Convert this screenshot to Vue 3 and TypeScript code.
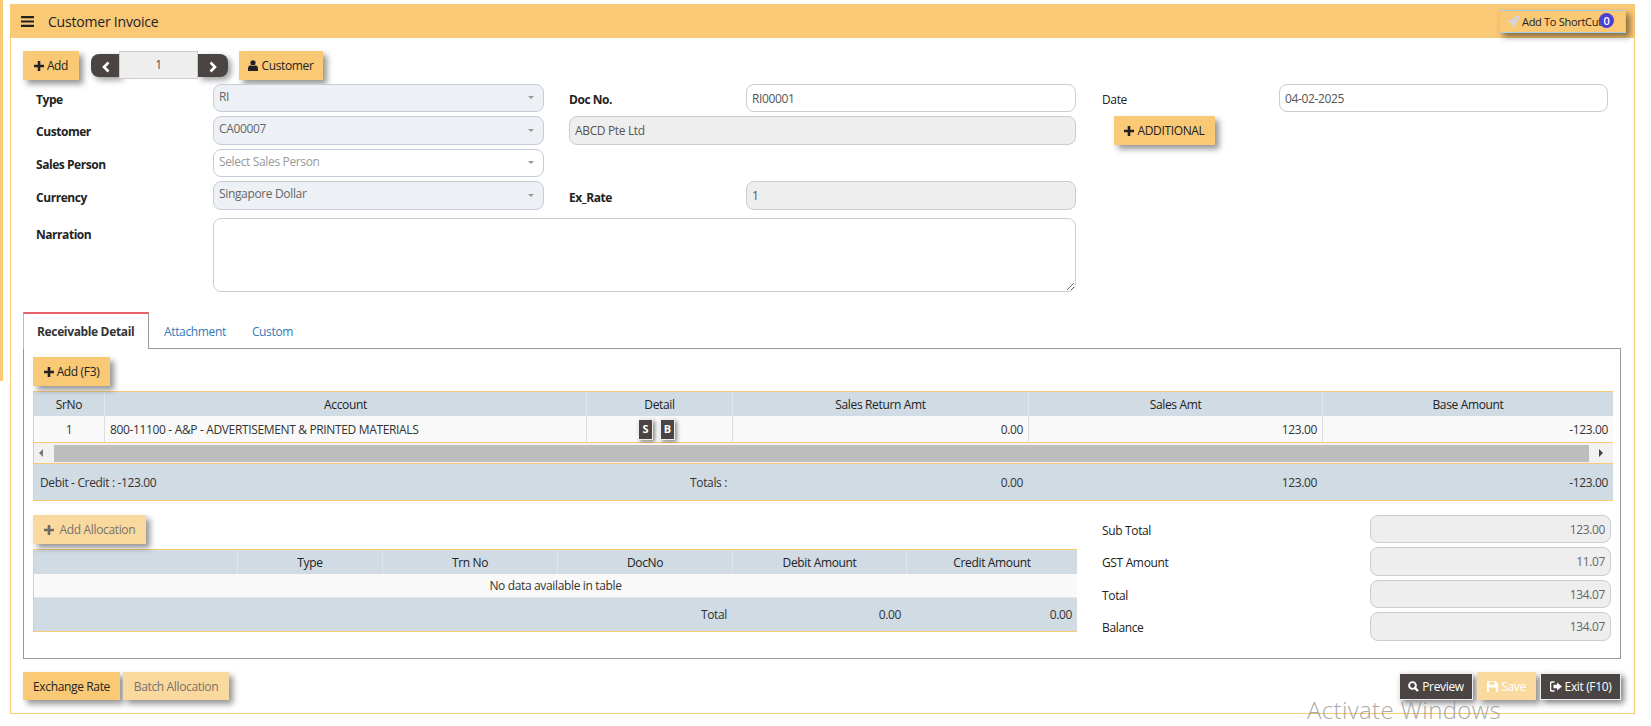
<script setup lang="ts">
const mainCols: number[] = [70, 482, 146, 296, 294, 291]
const allocCols: number[] = [203, 145, 175, 175, 174, 171]
const totals = [
  { label: 'Sub Total', value: '123.00' },
  { label: 'GST Amount', value: '11.07' },
  { label: 'Total', value: '134.07' },
  { label: 'Balance', value: '134.07' },
]
</script>

<template>
  <div class="page">
    <div class="strip"></div>
    <main class="panel">
      <header class="topbar">
        <svg class="burger" width="13" height="11" viewBox="0 0 13 11"><path d="M0 0h13v2.200H0zM0 4.400h13v2.200H0zM0 8.800h13V11H0z" fill="#222" /></svg>
        <h1 class="title">Customer Invoice</h1>
        <button class="shortcut">
          <svg width="13" height="13" viewBox="0 0 12 12"><path d="M11.500.5C8.500.6 6 2 4.300 4.300L1.800 4.600.5 6.600l2.200.2 2.500 2.500.2 2.200 2-1.300.3-2.500C10 7 11.400 4.500 11.500.5z" fill="#d3d6da" /><circle cx="8.300" cy="3.700" r="1" fill="#fac976" /></svg>
          <span>Add To ShortCut</span>
          <b class="badge">0</b>
        </button>
      </header>

      <div class="body">
        <div class="toolbar">
          <button class="btn w-add">
            <svg class="ico" width="10" height="10" viewBox="0 0 10 10"><path d="M3.700 0h2.600v3.700H10v2.600H6.300V10H3.700V6.300H0V3.700h3.700z" fill="#222" /></svg>Add
          </button>
          <div class="pager">
            <button class="pg pg-l"><svg width="10" height="12" viewBox="0 0 10 12"><path d="M7.500 1.500 3 6l4.500 4.500" fill="none" stroke="#fff" stroke-width="2.600" /></svg></button>
            <div class="pg-val">1</div>
            <button class="pg pg-r"><svg width="10" height="12" viewBox="0 0 10 12"><path d="M2.500 1.500 7 6l-4.500 4.500" fill="none" stroke="#fff" stroke-width="2.600" /></svg></button>
          </div>
          <button class="btn w-cust">
            <svg class="ico" width="10" height="11" viewBox="0 0 10 11"><circle cx="5" cy="2.800" r="2.600" fill="#222" /><path d="M0 11V8.500C0 6.500 1.200 5.300 2.600 5.200 3.300 5.800 4.100 6.100 5 6.100s1.700-.3 2.400-.9C8.800 5.300 10 6.500 10 8.500V11z" fill="#222" /></svg>Customer
          </button>
        </div>

        <form class="form" @submit.prevent>
          <label class="lbl strong c1 r1">Type</label>
          <div class="sel locked c2 r1"><span>RI</span><i class="caret"></i></div>
          <label class="lbl strong c4 r1">Doc No.</label>
          <input class="inp c5 r1" value="RI00001" />
          <label class="lbl c7 r1">Date</label>
          <input class="inp c8 r1" value="04-02-2025" />

          <label class="lbl strong c1 r2 up">Customer</label>
          <div class="sel locked c2 r2"><span>CA00007</span><i class="caret"></i></div>
          <input class="inp off wide r2" value="ABCD Pte Ltd" readonly />
          <div class="add-cell r2">
            <button class="btn w-additional">
              <svg class="ico" width="10" height="10" viewBox="0 0 10 10"><path d="M3.700 0h2.600v3.700H10v2.600H6.300V10H3.700V6.300H0V3.700h3.700z" fill="#222" /></svg>ADDITIONAL
            </button>
          </div>

          <label class="lbl strong c1 r3">Sales Person</label>
          <div class="sel c2 r3"><span class="ph">Select Sales Person</span><i class="caret"></i></div>

          <label class="lbl strong c1 r4">Currency</label>
          <div class="sel locked c2 r4"><span>Singapore Dollar</span><i class="caret"></i></div>
          <label class="lbl strong c4 r4">Ex_Rate</label>
          <input class="inp off c5 r4" value="1" readonly />

          <label class="lbl strong narr-l c1 r5">Narration</label>
          <textarea class="area r5"></textarea>
        </form>

        <nav class="tabs">
          <a class="tab active">Receivable Detail</a>
          <a class="tab t-att">Attachment</a>
          <a class="tab">Custom</a>
        </nav>

        <section class="tabpane">
          <button class="btn w-f3">
            <svg class="ico" width="10" height="10" viewBox="0 0 10 10"><path d="M3.700 0h2.600v3.700H10v2.600H6.300V10H3.700V6.300H0V3.700h3.700z" fill="#222" /></svg>Add (F3)
          </button>

          <div class="grid main-grid">
            <table>
              <colgroup><col v-for="(w, i) in mainCols" :key="i" :style="{ width: w + 'px' }" /></colgroup>
              <thead>
                <tr>
                  <th>SrNo</th><th>Account</th><th>Detail</th><th>Sales Return Amt</th><th>Sales Amt</th><th>Base Amount</th>
                </tr>
              </thead>
              <tbody>
                <tr class="row-main">
                  <td class="c">1</td>
                  <td>800-11100 - A&amp;P - ADVERTISEMENT &amp; PRINTED MATERIALS</td>
                  <td class="c mini-cell"><span class="mini">S</span><span class="mini">B</span></td>
                  <td class="r">0.00</td>
                  <td class="r">123.00</td>
                  <td class="r">-123.00</td>
                </tr>
              </tbody>
            </table>
            <div class="scrollbar">
              <i class="arrow-l"></i>
              <div class="thumb"></div>
              <i class="arrow-r"></i>
            </div>
            <table>
              <colgroup><col v-for="(w, i) in mainCols" :key="i" :style="{ width: w + 'px' }" /></colgroup>
              <tfoot>
                <tr class="foot-main">
                  <td colspan="2">Debit - Credit : -123.00</td>
                  <td class="r">Totals :</td>
                  <td class="r">0.00</td>
                  <td class="r">123.00</td>
                  <td class="r">-123.00</td>
                </tr>
              </tfoot>
            </table>
          </div>

          <div class="lower">
            <div class="lower-left">
              <button class="btn dim w-alloc">
                <svg class="ico" width="10" height="10" viewBox="0 0 10 10"><path d="M3.700 0h2.600v3.700H10v2.600H6.300V10H3.700V6.300H0V3.700h3.700z" fill="#6f6a62" /></svg>&nbsp;Add Allocation
              </button>
              <div class="grid alloc-grid">
                <table>
                  <colgroup><col v-for="(w, i) in allocCols" :key="i" :style="{ width: w + 'px' }" /></colgroup>
                  <thead>
                    <tr><th></th><th>Type</th><th>Trn No</th><th>DocNo</th><th>Debit Amount</th><th>Credit Amount</th></tr>
                  </thead>
                  <tbody>
                    <tr class="row-empty"><td colspan="6" class="c">No data available in table</td></tr>
                  </tbody>
                  <tfoot>
                    <tr class="foot-alloc">
                      <td colspan="4" class="r">Total</td>
                      <td class="r">0.00</td>
                      <td class="r">0.00</td>
                    </tr>
                  </tfoot>
                </table>
              </div>
            </div>
            <div class="sums">
              <template v-for="t in totals" :key="t.label">
                <span class="lbl sum-l">{{ t.label }}</span>
                <input class="inp off num" :value="t.value" readonly />
              </template>
            </div>
          </div>
        </section>

        <footer class="actions">
          <div class="act-group">
            <button class="btn flat">Exchange Rate</button>
            <button class="btn flat dim">Batch Allocation</button>
          </div>
          <div class="act-group right">
            <button class="btn dark w-prev">
              <svg class="ico" width="11" height="11" viewBox="0 0 11 11"><circle cx="4.500" cy="4.500" r="3.400" fill="none" stroke="#fff" stroke-width="1.900" /><path d="M7 7l3 3" stroke="#fff" stroke-width="2.400" /></svg>Preview
            </button>
            <button class="btn dim save">
              <svg class="ico" width="11" height="11" viewBox="0 0 11 11"><path d="M0 0h8.500L11 2.500V11H0z" fill="#fff" /><path d="M2.500 0.800h5v3h-5zM2.200 6.500h6.600V11H2.200z" fill="#fad793" /></svg>Save
            </button>
            <button class="btn dark w-exit">
              <svg class="ico" width="12" height="11" viewBox="0 0 12 11"><path d="M4.500 1H2C1 1 .5 1.600 .5 2.500v6C.5 9.400 1 10 2 10h2.500" fill="none" stroke="#fff" stroke-width="1.500" /><path d="M7 1.500 12 5.500 7 9.500V7.300H3.500V3.700H7z" fill="#fff" /></svg>Exit (F10)
            </button>
          </div>
        </footer>
      </div>
    </main>
    <div class="watermark">Activate Windows</div>
  </div>
</template>

<style>
html, body { margin: 0; background: #fff; overflow: hidden; }
</style>

<style scoped>
* { box-sizing: border-box; }
.page {
  position: relative;
  display: flex;
  align-items: flex-start;
  width: 1651px;
  height: 726px;
  overflow: hidden;
  font-family: "Open Sans", "Noto Sans", sans-serif;
  font-size: 12px;
  letter-spacing: -0.35px;
  color: #333;
}
.strip { width: 3px; height: 381px; background: #fac976; margin-right: 7px; flex: none; }
.panel {
  width: 1625px;
  height: 710px;
  margin-top: 4px;
  border: 1px solid #fac976;
  border-top: 0;
}
.topbar {
  height: 34px;
  background: #fac976;
  margin: 0 -1px;
  display: flex;
  align-items: center;
  padding: 0 9px 0 11px;
}
.title { font-size: 14px; font-weight: 400; margin: 0 0 0 14px; color: #222; letter-spacing: -0.2px; }
.burger { flex: none; }
.shortcut {
  margin-left: auto;
  width: 127px;
  height: 23px;
  background: #fac976;
  border: 1px solid #a9cfe6;
  box-shadow: 4px 4px 6px rgba(0, 0, 0, 0.45);
  padding: 0 0 0 7px;
  display: flex;
  align-items: center;
  gap: 2px;
  font: inherit;
  font-size: 11px;
  letter-spacing: -0.3px;
  color: #222;
  position: relative;
}
.badge {
  position: absolute;
  left: 99px;
  top: 2px;
  width: 15px;
  height: 15px;
  border-radius: 50%;
  background: #4b3fd6;
  color: #fff;
  font-size: 11px;
  line-height: 15px;
  text-align: center;
  font-weight: 600;
}
.body { padding: 13px 14px 0 12px; }
.toolbar { display: flex; align-items: flex-start; gap: 12px; }
.btn {
  height: 29px;
  padding: 0 11px;
  background: #fac976;
  color: #222;
  border: 0;
  box-shadow: 4px 4px 6px rgba(0, 0, 0, 0.42);
  font: inherit;
  font-size: 12px;
  letter-spacing: -0.35px;
  display: inline-flex;
  align-items: center;
  justify-content: center;
  white-space: nowrap;
}
.w-add { width: 56px; padding: 0; }
.w-cust { width: 84px; padding: 0; margin-left: -1px; }
.w-additional { width: 101px; padding: 0; }
.w-f3 { width: 77px; padding: 0; }
.w-alloc { width: 113px; padding: 0; }
.w-prev { width: 74px; padding: 0; }
.w-exit { width: 81px; padding: 0; }
.ico { margin-right: 3px; flex: none; }
.dim { background: #fad99f; color: #77736b; }
.dark { background: #4a4543; color: #fff; height: 27px; margin-top: 1px; border: 1px solid #eee; box-shadow: 3px 3px 6px rgba(0, 0, 0, 0.5); }
.save { color: #fff; height: 28px; width: 59px; padding: 0; }
.pager { display: flex; align-items: flex-start; height: 29px; }
.pg {
  height: 23px;
  margin-top: 3px;
  background: #4a4543;
  border: 0;
  display: flex;
  align-items: center;
  justify-content: center;
  box-shadow: 3px 3px 6px rgba(0, 0, 0, 0.4);
  padding: 3px 0 0;
}
.pg-l { width: 29px; border-radius: 8px 0 0 8px; }
.pg-r { width: 30px; border-radius: 0 8px 8px 0; }
.pg-val {
  width: 79px;
  height: 28px;
  margin-left: -1px;
  background: #eee;
  border: 1px solid #ccc;
  text-align: center;
  line-height: 26px;
  color: #555;
  position: relative;
}
.form {
  margin: 4px 0 0 13px;
  display: grid;
  grid-template-columns: 177px 331px 25px 177px 330px 26px 177px 329px;
  grid-template-rows: 28px 29px 28px 29px 78px;
  row-gap: 4px;
}
.c1 { grid-column: 1; }
.c2 { grid-column: 2; }
.c4 { grid-column: 4; }
.c5 { grid-column: 5; }
.c7 { grid-column: 7; }
.c8 { grid-column: 8; }
.r1 { grid-row: 1; }
.r2 { grid-row: 2; }
.r3 { grid-row: 3; }
.r4 { grid-row: 4; }
.r5 { grid-row: 5; }
.lbl { display: flex; align-items: center; padding-top: 3px; color: #222; }
.lbl.up { padding-top: 1px; }
.strong { font-weight: 700; letter-spacing: -0.45px; }
.sel {
  border: 1px solid #c5cbd8;
  border-radius: 8px;
  padding: 0 5px 4px;
  display: flex;
  align-items: center;
  justify-content: space-between;
  color: #666;
  background: #fff;
}
.locked { background: #edf0f5; }
.ph { color: #999; }
.caret { width: 0; height: 0; border: 3px solid transparent; border-top: 3px solid #999; border-bottom: 0; margin-right: 4px; margin-top: 3px; }
.inp {
  border: 1px solid #ccc;
  border-radius: 8px;
  padding: 0 5px;
  font: inherit;
  letter-spacing: -0.35px;
  color: #555;
  background: #fff;
  min-width: 0;
  outline: none;
  width: 100%;
}
.off { background: #eee; }
.wide { grid-column: 4 / span 2; }
.add-cell { grid-column: 7 / span 2; padding-left: 12px; }
.lbl.narr-l { align-items: flex-start; padding-top: 12px; }
.area {
  grid-column: 2 / span 4;
  margin-top: 4px;
  height: 74px;
  border: 1px solid #ccc;
  border-radius: 8px;
  outline: none;
  background: #fff;
}
.tabs { display: flex; margin: 20px 0 0 0; height: 36px; }
.tab {
  padding: 2px 13px 0;
  display: flex;
  align-items: center;
  color: #337ab7;
  height: 36px;
}
.t-att { margin-left: 1px; padding-right: 13px; }
.tab.active {
  width: 126px;
  height: 37px;
  padding: 0 0 0 13px;
  color: #333;
  font-weight: 700;
  background: #fff;
  border-top: 2px solid #e8616b;
  border-left: 1px solid #bbb;
  border-right: 1px solid #999;
  position: relative;
  z-index: 1;
  margin-right: 1px;
}
.tabpane {
  width: 1598px;
  height: 311px;
  border: 1px solid #999;
  padding: 8px 7px 0 9px;
  background: #fff;
}
.grid { margin-top: 5px; border-left: 1px solid #fac976; }
table { border-collapse: separate; border-spacing: 0; table-layout: fixed; width: 100%; }
th {
  height: 24px;
  background: #d0dbe4;
  font-weight: 400;
  color: #222;
  padding: 0;
  border-left: 1px solid #dfe5ea;
}
th:first-child { border-left: 0; }
td { padding: 0 5px; white-space: nowrap; color: #333; }
.c { text-align: center; }
.r { text-align: right; }
.main-grid { width: 1580px; border-top: 1px solid #fac976; border-bottom: 1px solid #fac976; }
.row-main td { height: 27px; background: #f9f9f9; border-left: 1px solid #ddd; border-bottom: 1px solid #fac976; }
.row-main td:first-child { border-left: 0; }
.row-main .mini-cell { padding: 0 6px 0 0; }
.mini {
  display: inline-block;
  width: 15px;
  height: 21px;
  margin-left: 7px;
  background: #4a4543;
  color: #fff;
  border: 1px solid #eee;
  line-height: 18px;
  font-weight: 700;
  font-size: 11px;
  letter-spacing: 0;
  box-shadow: 2px 2px 4px rgba(0, 0, 0, 0.45);
}
.mini:first-child { margin-left: 0; }
.scrollbar {
  height: 21px;
  display: flex;
  align-items: center;
  background: #f1f1f1;
  padding: 0 0 0 20px;
  position: relative;
  border-bottom: 1px solid #fac976;
}
.thumb { width: 1535px; height: 17px; background: #bdbdbd; }
.arrow-l, .arrow-r { position: absolute; top: 6px; width: 0; height: 0; border: 4px solid transparent; }
.arrow-l { left: 5px; border-right: 4px solid #777; border-left: 0; }
.arrow-r { right: 10px; border-left: 4px solid #444; border-right: 0; }
.foot-main td { height: 36px; background: #d0dbe4; color: #333; }
.foot-main td:first-child { padding-left: 6px; }
.lower { display: flex; margin-top: 14px; }
.lower-left { width: 1044px; flex: none; }
.alloc-grid { border: 1px solid #fac976; border-right: 0; margin-top: 5px; }
.row-empty td { height: 24px; background: #f9f9f9; border-bottom: 1px solid #e3e8ec; }
.foot-alloc td { height: 33px; background: #d0dbe4; }
.sums {
  margin-left: 25px;
  display: grid;
  grid-template-columns: 268px 241px;
  grid-template-rows: 28px 29px 28px 29px;
  row-gap: 4px;
}
.sum-l { padding-top: 2px; }
.num { text-align: right; color: #666; }
.actions { display: flex; justify-content: space-between; margin-top: 13px; width: 1598px; }
.act-group { display: flex; align-items: flex-start; gap: 3px; }
.act-group.right { gap: 4px; }
.flat { width: 97px; height: 28px; padding: 0; }
.flat.dim { width: 106px; }
.watermark {
  position: absolute;
  left: 1307px;
  top: 694px;
  font-size: 24px;
  line-height: 32px;
  font-weight: 300;
  letter-spacing: 0.35px;
  color: rgba(130, 130, 130, 0.7);
  white-space: nowrap;
}
</style>
